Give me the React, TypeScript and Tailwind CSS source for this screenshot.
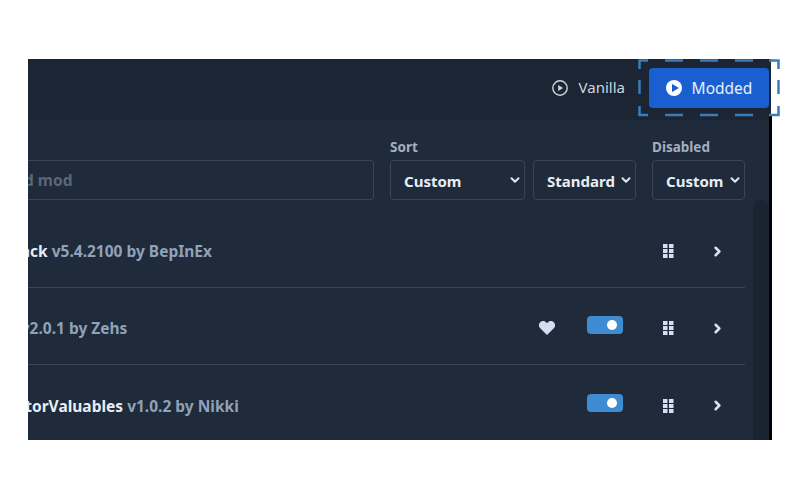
import { ChevronDown, ChevronRight } from 'lucide-react'

const fontStack = { fontFamily: '"Noto Sans", sans-serif' }

const ringDashes = [
  'M1.5 10V1.5H10',
  'M27 1.5H45',
  'M62 1.5H80',
  'M97 1.5H115',
  'M131 1.5H140.5V10',
  'M140.5 21V35',
  'M140.5 47V56H131',
  'M115 56H97',
  'M80 56H62',
  'M45 56H27',
  'M10 56H1.5V47',
  'M1.5 35V21',
]

function PlayCircle({ solid }: { solid?: boolean }) {
  if (solid) {
    return (
      <svg width="16" height="16" viewBox="0 0 16 16" aria-hidden="true">
        <circle cx="8" cy="8" r="8" fill="#ffffff" />
        <path d="M6 4.6v6.8a.5.5 0 0 0 .76.42l5.3-3.4a.5.5 0 0 0 0-.84l-5.3-3.4A.5.5 0 0 0 6 4.6z" fill="#1a5fd0" />
      </svg>
    )
  }
  return (
    <svg width="16" height="16" viewBox="0 0 16 16" aria-hidden="true">
      <circle cx="8" cy="8" r="7.2" fill="none" stroke="#cbd5e1" strokeWidth="1.4" />
      <path d="M6.2 5v6l4.9-3z" fill="#cbd5e1" />
    </svg>
  )
}

function GripIcon() {
  return (
    <svg width="11" height="14" viewBox="0 0 11 14" aria-hidden="true" className="block">
      {[0, 5, 10].map((y) => (
        <g key={y} fill="#d6dff5">
          <rect x="0" y={y} width="4.5" height="4" />
          <rect x="6" y={y} width="4.5" height="4" />
        </g>
      ))}
    </svg>
  )
}

function HeartIcon() {
  return (
    <svg width="16" height="14" viewBox="0 0 16 14" aria-hidden="true" className="block">
      <path d="M8 14 1.2 7.2A4.1 4.1 0 0 1 1.2 1.3a4.1 4.1 0 0 1 5.8 0L8 2.2l1-.9a4.1 4.1 0 0 1 5.8 0 4.1 4.1 0 0 1 0 5.9z" fill="#d3def3" />
    </svg>
  )
}

function Toggle() {
  return (
    <div className="flex h-[18px] w-9 items-center justify-end rounded bg-[#3f8bd2] pr-[6px]">
      <span className="size-[10px] rounded-full bg-white" />
    </div>
  )
}

function Select({ label, value, width }: { label?: string; value: string; width: string }) {
  return (
    <div className={`flex flex-col ${width}`}>
      {label && <span className="mb-[5px] text-[13.5px] leading-[16px] font-bold text-[#a4afbf]">{label}</span>}
      <div className="flex h-10 items-center justify-between rounded border border-[#39455a] pr-[1px] pl-[13px] text-[15px] font-bold text-[#e8edf5]">
        <span className="pt-[2px]">{value}</span>
        <ChevronDown size={14} strokeWidth={3.4} className="mt-[-1px] mr-[1px] text-[#dfe6f0]" />
      </div>
    </div>
  )
}

function ModRow({
  name,
  meta,
  offset,
  heart,
  toggle,
  divider,
}: {
  name: string
  meta: string
  offset: string
  heart?: boolean
  toggle?: boolean
  divider?: boolean
}) {
  return (
    <div className={`flex h-[77px] items-center pt-[4px] ${divider ? 'border-b border-[#38455a]' : ''}`}>
      <p className={`flex-1 whitespace-nowrap pt-[2px] text-[15.5px] font-bold text-[#8fa2b9] ${offset}`}>
        <span className="text-[#e8edf5]">{name}</span> {meta}
      </p>
      {heart && (
        <div className="mt-[-1px] mr-[32px]">
          <HeartIcon />
        </div>
      )}
      {toggle && (
        <div className="mt-[-6px] mr-[40px]">
          <Toggle />
        </div>
      )}
      <GripIcon />
      <ChevronRight size={15} strokeWidth={4} className="mr-[20px] ml-[36px] text-[#d6e2f2]" />
    </div>
  )
}

export default function App() {
  return (
    <div className="h-[500px] w-[800px] overflow-hidden bg-white pt-[59px] pl-[28px]" style={fontStack}>
      <div className="relative h-[381px] w-[744px]">
        <div className="h-full w-[743px] overflow-hidden bg-[#1f2a3a]">
          <header className="flex h-[61px] items-center justify-end bg-[#1c2533]">
            <button type="button" className="mb-[4px] flex items-center gap-[11px] text-[15px] text-[#cbd5e1]">
              <PlayCircle />
              Vanilla
            </button>
            <button
              type="button"
              className="mr-[2px] mb-[3px] ml-[24px] flex h-10 w-[120px] items-center justify-center gap-[10px] rounded bg-[#1a5fd0] text-[15.5px] text-[#e8f0fd]"
            >
              <PlayCircle solid />
              <span className="pt-[1px]">Modded</span>
            </button>
          </header>

          <div className="pr-[26px]">
            <div className="flex items-end gap-4 pt-[19px]">
              <div className="flex h-10 w-[346px] items-center rounded-r border-y border-r border-[#39455a] text-[15.5px] font-bold text-[#59677a]">
                <span className="ml-[-4px] whitespace-nowrap pt-[2px]">d mod</span>
              </div>
              <div className="flex items-end gap-2">
                <Select label="Sort" value="Custom" width="w-[135px]" />
                <Select value="Standard" width="w-[103px]" />
              </div>
              <Select label="Disabled" value="Custom" width="w-[93px]" />
            </div>
            <div className="pt-[11px]">
              <ModRow name="BepInEx Pack" meta="v5.4.2100 by BepInEx" offset="ml-[-84px]" divider />
              <ModRow name="SomeMod" meta="v2.0.1 by Zehs" offset="ml-[-88px]" heart toggle divider />
              <ModRow name="ScrapDoctorValuables" meta="v1.0.2 by Nikki" offset="ml-[-74px]" toggle />
            </div>
          </div>
        </div>

        {/* black edge of the window, below the focus ring */}
        <div className="absolute top-[56px] right-0 bottom-0 w-[3px] bg-black" />
        {/* scroll track */}
        <div className="absolute top-[141px] right-[3px] bottom-0 w-4 rounded-t-lg bg-[#1a2431]" />
        {/* focus ring */}
        <svg className="absolute top-0 left-[610px]" width="142" height="58" viewBox="0 0 142 58" aria-hidden="true">
          {ringDashes.map((d) => (
            <path key={d} d={d} fill="none" stroke="#3b7db8" strokeWidth="2.5" />
          ))}
        </svg>
      </div>
    </div>
  )
}
